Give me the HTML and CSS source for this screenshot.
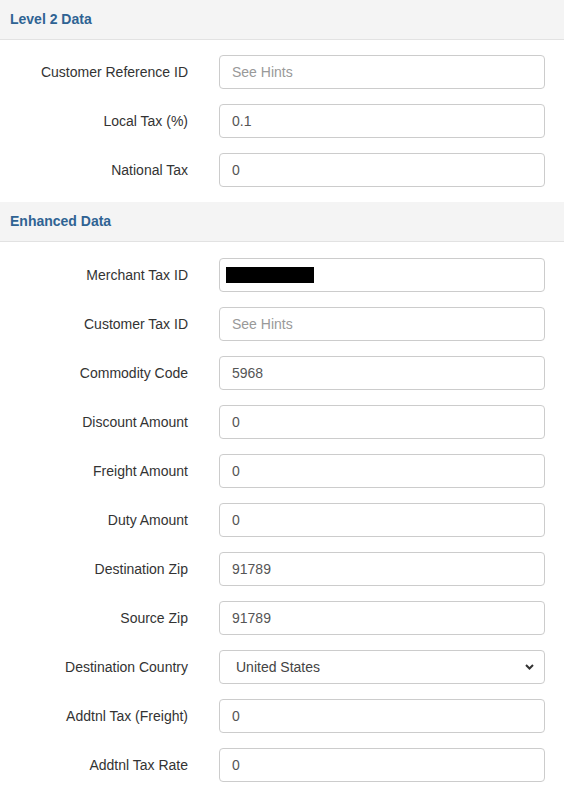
FILE: index.html
```html
<!DOCTYPE html>
<html>
<head>
<meta charset="utf-8">
<link rel="stylesheet" href="styles.css">
</head>
<body>
<div class="page">
  <div class="panel-heading">Level 2 Data</div>
  <div class="panel-body">
    <div class="row"><label class="lbl">Customer Reference ID</label><input class="ctl" type="text" placeholder="See Hints"></div>
    <div class="row"><label class="lbl">Local Tax (%)</label><input class="ctl" type="text" value="0.1"></div>
    <div class="row"><label class="lbl">National Tax</label><input class="ctl" type="text" value="0"></div>
  </div>
  <div class="panel-heading">Enhanced Data</div>
  <div class="panel-body panel-body-b">
    <div class="row"><label class="lbl">Merchant Tax ID</label><div class="ctl redacted-wrap"><span class="redacted"></span></div></div>
    <div class="row"><label class="lbl">Customer Tax ID</label><input class="ctl" type="text" placeholder="See Hints"></div>
    <div class="row"><label class="lbl">Commodity Code</label><input class="ctl" type="text" value="5968"></div>
    <div class="row"><label class="lbl">Discount Amount</label><input class="ctl" type="text" value="0"></div>
    <div class="row"><label class="lbl">Freight Amount</label><input class="ctl" type="text" value="0"></div>
    <div class="row"><label class="lbl">Duty Amount</label><input class="ctl" type="text" value="0"></div>
    <div class="row"><label class="lbl">Destination Zip</label><input class="ctl" type="text" value="91789"></div>
    <div class="row"><label class="lbl">Source Zip</label><input class="ctl" type="text" value="91789"></div>
    <div class="row"><label class="lbl">Destination Country</label>
      <div class="select-wrap">
        <select class="ctl sel"><option>United States</option></select>
        <svg class="chev" width="9" height="6" viewBox="0 0 9 6"><path d="M1 1 L4.5 4.5 L8 1" fill="none" stroke="#333" stroke-width="2"/></svg>
      </div>
    </div>
    <div class="row"><label class="lbl">Addtnl Tax (Freight)</label><input class="ctl" type="text" value="0"></div>
    <div class="row"><label class="lbl">Addtnl Tax Rate</label><input class="ctl" type="text" value="0"></div>
  </div>
</div>
</body>
</html>
```

FILE: styles.css
```css
html, body {
  margin: 0;
  padding: 0;
  background: #fff;
}
body {
  font-family: "Liberation Sans", Arial, sans-serif;
  font-size: 14px;
  color: #333;
}
.page {
  width: 564px;
}
.panel-heading {
  height: 39px;
  box-sizing: content-box;
  line-height: 39px;
  background: #f4f4f4;
  border-bottom: 1px solid #e2e2e2;
  padding: 0 10px;
  font-weight: bold;
  color: #2f6393;
}
.panel-body {
  padding-top: 15px;
}
.panel-body-b {
  padding-top: 16px;
}
.row {
  display: grid;
  grid-template-columns: 189px 326px;
  column-gap: 30px;
  align-items: center;
  margin-bottom: 15px;
}
.lbl {
  text-align: right;
  color: #333;
  font-size: 14px;
  padding-right: 1px;
}
.ctl {
  box-sizing: border-box;
  width: 326px;
  height: 34px;
  margin: 0;
  padding: 6px 12px;
  border: 1px solid #ccc;
  border-radius: 4px;
  font-family: "Liberation Sans", Arial, sans-serif;
  font-size: 14px;
  color: #555;
  background: #fff;
  outline: none;
}
.ctl::placeholder {
  color: #999;
}
.redacted-wrap {
  display: flex;
  align-items: center;
  padding-left: 6px;
}
.redacted {
  display: block;
  width: 88px;
  height: 16px;
  background: #000;
}
.select-wrap {
  position: relative;
  width: 326px;
  height: 34px;
}
.sel {
  -webkit-appearance: none;
  appearance: none;
  padding-left: 16px;
  color: #444;
}
.chev {
  position: absolute;
  right: 11px;
  top: 14px;
}
```
